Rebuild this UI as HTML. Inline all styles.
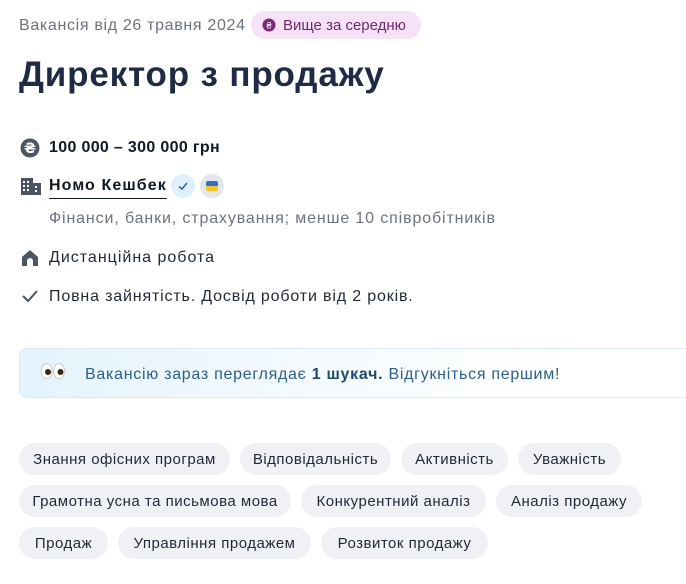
<!DOCTYPE html>
<html><head><meta charset="utf-8"><style>
body{margin:0;width:686px;height:584px;background:#fff;font-family:"Liberation Sans","Noto Sans CJK SC",sans-serif;color:#1f2937;position:relative;overflow:hidden}
.a{position:absolute;white-space:nowrap}
.tag{position:absolute;height:32px;line-height:34px;background:#f0f1f5;border-radius:16px;font-size:15px;letter-spacing:0.5px;text-align:center;color:#1f2937}
svg{position:absolute}
</style></head><body>
<div class="a" style="left:19px;top:17px;font-size:16px;letter-spacing:0.67px;color:#6b7280">Вакансія від 26 травня 2024</div>
<div class="a" style="left:251px;top:11px;width:170px;height:28px;background:#f6e2f7;border-radius:14px"></div>
<svg style="left:262px;top:18px" width="14" height="14" viewBox="0 0 14 14"><circle cx="7" cy="7" r="6.5" fill="#7a2b73"/><text x="7" y="10.5" font-size="9" fill="#fff" text-anchor="middle" font-family="Liberation Sans">₴</text></svg>
<div class="a" style="left:283px;top:17px;font-size:15px;color:#6e2a68">Вище за середню</div>
<div class="a" style="left:19px;top:55px;font-size:35px;letter-spacing:0.84px;font-weight:bold;color:#1e2a46">Директор з продажу</div>

<svg style="left:20px;top:138px" width="20" height="20" viewBox="0 0 20 20"><circle cx="10" cy="10" r="9.5" fill="#4b5563"/><text x="10" y="15" font-size="14" font-weight="bold" fill="#fff" text-anchor="middle" font-family="DejaVu Sans">₴</text></svg>
<div class="a" style="left:49px;top:139px;font-size:16px;letter-spacing:0.33px;font-weight:bold;color:#111827">100 000 – 300 000 грн</div>

<svg style="left:21px;top:178px" width="20" height="17" viewBox="0 0 20 17"><rect x="0" y="0" width="12" height="17" fill="#4b5563"/><rect x="12" y="5" width="8" height="12" fill="#4b5563"/><g fill="#fff"><rect x="2" y="3" width="2" height="2"/><rect x="6" y="3" width="2" height="2"/><rect x="2" y="7" width="2" height="2"/><rect x="6" y="7" width="2" height="2"/><rect x="2" y="11" width="2" height="2"/><rect x="6" y="11" width="2" height="2"/><rect x="14" y="8" width="2" height="2"/><rect x="14" y="12" width="2" height="2"/></g></svg>
<div class="a" style="left:49px;top:177px;font-size:16px;letter-spacing:1.1px;font-weight:bold;color:#111827;border-bottom:1.5px solid #111827;padding-bottom:3px">Номо Кешбек</div>
<div class="a" style="left:171px;top:174px;width:24px;height:24px;border-radius:12px;background:#e0f0fb"></div>
<svg style="left:177px;top:180px" width="12" height="12" viewBox="0 0 12 12"><path d="M2 6.5L5 9L10 3" stroke="#2b6cb0" stroke-width="1.6" fill="none"/></svg>
<div class="a" style="left:200px;top:174px;width:24px;height:24px;border-radius:12px;background:#e2e6ef"></div>
<div class="a" style="left:206px;top:181px;width:12px;height:5px;background:#2f6fd6;border-radius:2px 2px 0 0"></div>
<div class="a" style="left:206px;top:186px;width:12px;height:5px;background:#f5c518;border-radius:0 0 2px 2px"></div>
<div class="a" style="left:49px;top:210px;font-size:16px;letter-spacing:0.87px;color:#6b7280">Фінанси, банки, страхування; менше 10 співробітників</div>

<svg style="left:21px;top:249px" width="18" height="18" viewBox="0 0 18 18"><path d="M9 1L1 8V17H6V12A3 3 0 0 1 12 12V17H17V8Z" fill="#4b5563"/></svg>
<div class="a" style="left:49px;top:249px;font-size:16px;letter-spacing:1px">Дистанційна робота</div>
<svg style="left:21px;top:288px" width="18" height="16" viewBox="0 0 18 16"><path d="M2 8L7 13L16 3" stroke="#4b5563" stroke-width="2" fill="none"/></svg>
<div class="a" style="left:49px;top:288px;font-size:16px;letter-spacing:0.84px">Повна зайнятість. Досвід роботи від 2 років.</div>

<div class="a" style="left:19px;top:348px;width:690px;height:48px;border:1px solid #dbeaf4;border-radius:8px;background:linear-gradient(100deg,#e3f3fc 0%,#f4fafd 40%,#fff 80%)"></div>
<div class="a" style="left:40px;top:362px;font-size:18px">
<svg style="position:static" width="26" height="18" viewBox="0 0 26 18"><ellipse cx="6.5" cy="9" rx="5.5" ry="7.5" fill="#fff" stroke="#ccc"/><ellipse cx="19" cy="9" rx="5.5" ry="7.5" fill="#fff" stroke="#ccc"/><circle cx="8" cy="10" r="3" fill="#3a2412"/><circle cx="20.5" cy="10" r="3" fill="#3a2412"/></svg></div>
<div class="a" style="left:85px;top:366px;font-size:16px;letter-spacing:0.72px;color:#2a5f8e">Вакансію зараз переглядає <b style="color:#1c4a74">1 шукач.</b> Відгукніться першим!</div>

<div class="tag" style="left:19px;top:443px;width:211px">Знання офісних програм</div>
<div class="tag" style="left:240px;top:443px;width:151px">Відповідальність</div>
<div class="tag" style="left:401px;top:443px;width:107px">Активність</div>
<div class="tag" style="left:518px;top:443px;width:103px">Уважність</div>
<div class="tag" style="left:19px;top:485px;width:272px">Грамотна усна та письмова мова</div>
<div class="tag" style="left:301px;top:485px;width:185px">Конкурентний аналіз</div>
<div class="tag" style="left:496px;top:485px;width:146px">Аналіз продажу</div>
<div class="tag" style="left:19px;top:527px;width:89px">Продаж</div>
<div class="tag" style="left:118px;top:527px;width:193px">Управління продажем</div>
<div class="tag" style="left:321px;top:527px;width:167px">Розвиток продажу</div>
</body></html>
